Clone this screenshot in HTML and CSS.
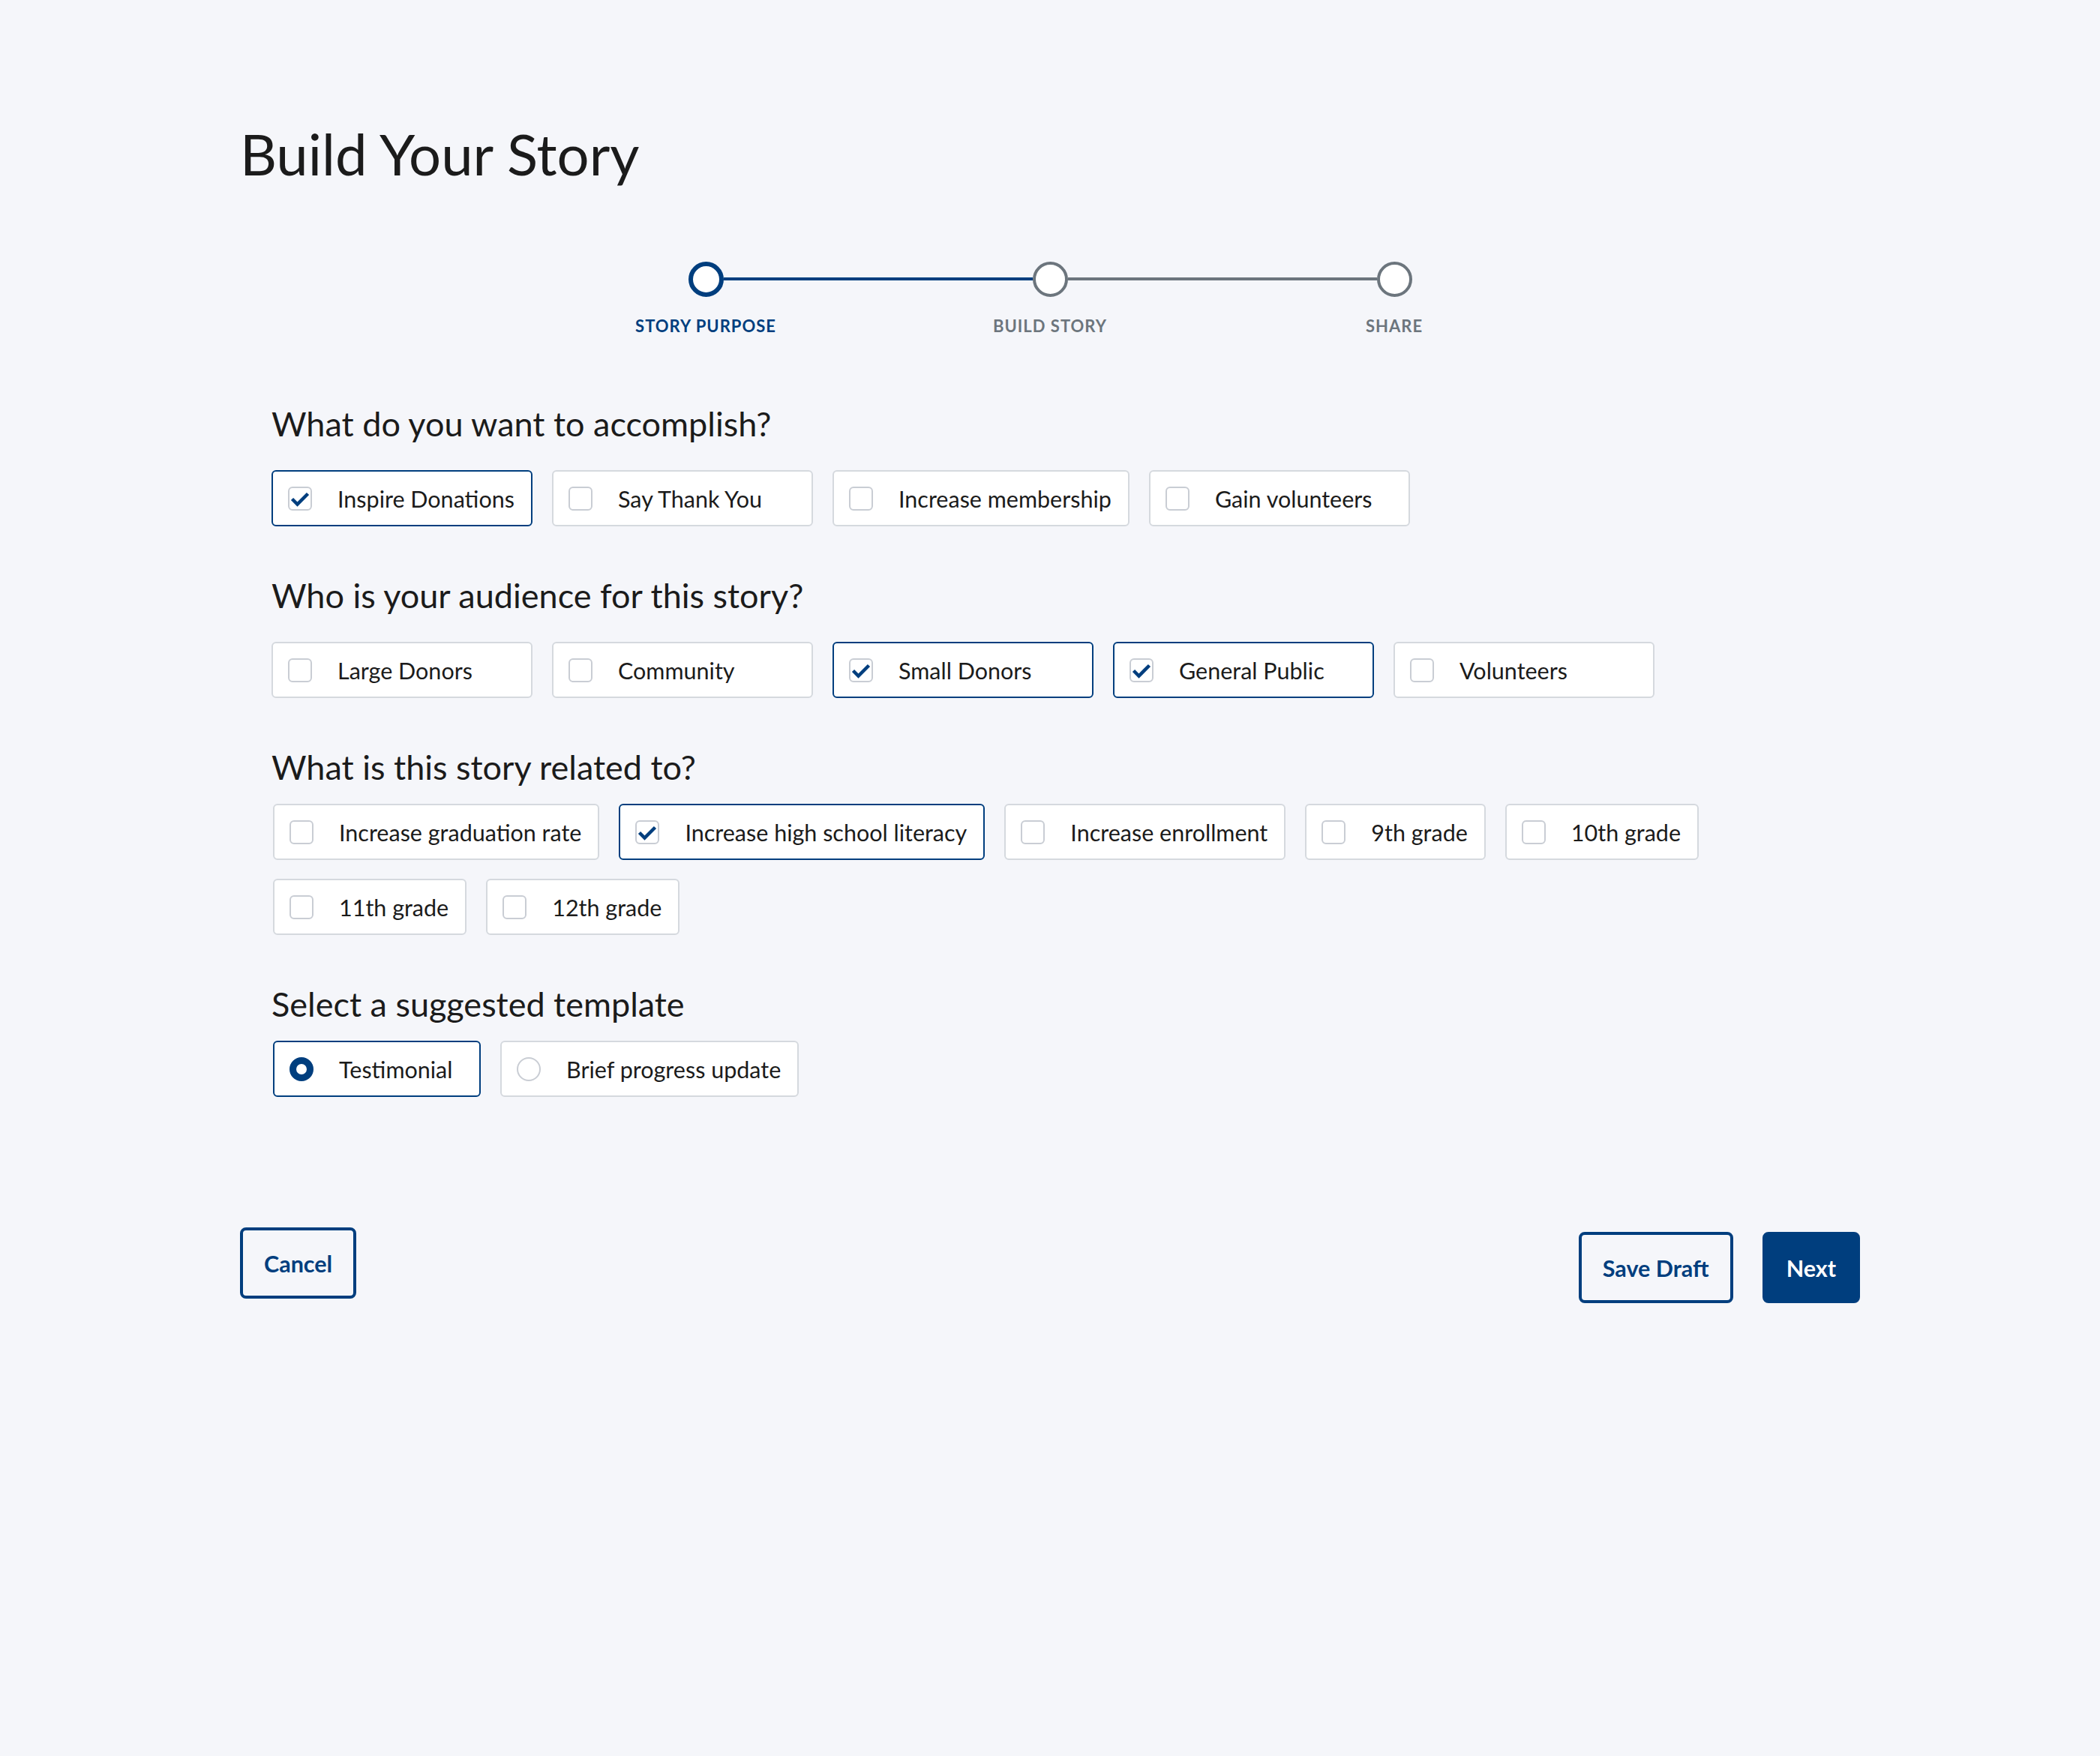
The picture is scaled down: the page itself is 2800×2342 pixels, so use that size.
FILE: index.html
```html
<!DOCTYPE html>
<html lang="en">
<head>
<meta charset="utf-8">
<title>Build Your Story</title>
<link rel="stylesheet" href="styles.css">
</head>
<body>
<main class="page">
  <h1 class="page-title">Build Your Story</h1>

  <nav class="stepper" aria-label="Progress">
    <div class="stepper-track">
      <span class="step-dot step-dot--active"></span>
      <span class="step-line step-line--done"></span>
      <span class="step-dot"></span>
      <span class="step-line"></span>
      <span class="step-dot"></span>
    </div>
    <ol class="stepper-labels">
      <li class="step-label step-label--active">STORY PURPOSE</li>
      <li class="step-label">BUILD STORY</li>
      <li class="step-label">SHARE</li>
    </ol>
  </nav>

  <form class="story-form">
    <section class="question question--wide">
      <h2 class="question-title">What do you want to accomplish?</h2>
      <div class="options">
        <label class="option option--checked"><span class="checkbox"><svg viewBox="0 0 28 28"><path d="M3.5 14.5 L10.5 21.5 L24.5 7.5"/></svg></span><span class="option-text">Inspire Donations</span></label>
        <label class="option"><span class="checkbox"></span><span class="option-text">Say Thank You</span></label>
        <label class="option"><span class="checkbox"></span><span class="option-text">Increase membership</span></label>
        <label class="option"><span class="checkbox"></span><span class="option-text">Gain volunteers</span></label>
      </div>
    </section>

    <section class="question question--wide">
      <h2 class="question-title">Who is your audience for this story?</h2>
      <div class="options">
        <label class="option"><span class="checkbox"></span><span class="option-text">Large Donors</span></label>
        <label class="option"><span class="checkbox"></span><span class="option-text">Community</span></label>
        <label class="option option--checked"><span class="checkbox"><svg viewBox="0 0 28 28"><path d="M3.5 14.5 L10.5 21.5 L24.5 7.5"/></svg></span><span class="option-text">Small Donors</span></label>
        <label class="option option--checked"><span class="checkbox"><svg viewBox="0 0 28 28"><path d="M3.5 14.5 L10.5 21.5 L24.5 7.5"/></svg></span><span class="option-text">General Public</span></label>
        <label class="option"><span class="checkbox"></span><span class="option-text">Volunteers</span></label>
      </div>
    </section>

    <section class="question question--compact">
      <h2 class="question-title">What is this story related to?</h2>
      <div class="options">
        <label class="option"><span class="checkbox"></span><span class="option-text">Increase graduation rate</span></label>
        <label class="option option--checked"><span class="checkbox"><svg viewBox="0 0 28 28"><path d="M3.5 14.5 L10.5 21.5 L24.5 7.5"/></svg></span><span class="option-text">Increase high school literacy</span></label>
        <label class="option"><span class="checkbox"></span><span class="option-text">Increase enrollment</span></label>
        <label class="option"><span class="checkbox"></span><span class="option-text">9th grade</span></label>
        <label class="option"><span class="checkbox"></span><span class="option-text">10th grade</span></label>
        <label class="option"><span class="checkbox"></span><span class="option-text">11th grade</span></label>
        <label class="option"><span class="checkbox"></span><span class="option-text">12th grade</span></label>
      </div>
    </section>

    <section class="question question--compact question--template">
      <h2 class="question-title">Select a suggested template</h2>
      <div class="options">
        <label class="option option--checked"><span class="radio radio--checked"></span><span class="option-text">Testimonial</span></label>
        <label class="option"><span class="radio"></span><span class="option-text">Brief progress update</span></label>
      </div>
    </section>
  </form>

  <footer class="actions">
    <button class="btn btn--outline" type="button">Cancel</button>
    <div class="actions-right">
      <button class="btn btn--outline" type="button">Save Draft</button>
      <button class="btn btn--primary" type="button">Next</button>
    </div>
  </footer>
</main>
</body>
</html>
```

FILE: styles.css
```css
* {
  box-sizing: border-box;
}

html,
body {
  margin: 0;
}

body {
  background: #f5f6fa;
  font-family: Lato, "Noto Sans", sans-serif;
  color: #1b1b1b;
}

.page {
  width: 2160px;
  margin: 0 auto;
  padding: 157px 0 300px;
}

.page-title {
  margin: 0;
  font-size: 76px;
  line-height: 96px;
  font-weight: 400;
}

/* Stepper */
.stepper {
  margin-top: 95px;
}

.stepper-track {
  width: 965px;
  height: 48px;
  margin: 0 auto;
  display: flex;
  align-items: center;
}

.step-dot {
  flex: none;
  width: 47px;
  height: 47px;
  border-radius: 50%;
  border: 4px solid #6c757d;
  background: #fff;
}

.step-dot--active {
  border: 6px solid #003e7e;
}

.step-line {
  flex: 1;
  height: 4px;
  background: #6c757d;
}

.step-line--done {
  background: #003e7e;
}

.stepper-labels {
  list-style: none;
  margin: 24px auto 0;
  padding: 0;
  width: 1377px;
  display: grid;
  grid-template-columns: repeat(3, 1fr);
}

.step-label {
  text-align: center;
  font-size: 22px;
  line-height: 30px;
  font-weight: 700;
  letter-spacing: 1px;
  color: #6c757d;
}

.step-label--active {
  color: #003e7e;
}

/* Form */
.story-form {
  margin-top: 85px;
  padding-left: 42px;
}

.question + .question {
  margin-top: 62px;
}

.question-title {
  margin: 0;
  font-size: 45px;
  line-height: 60px;
  font-weight: 400;
}

.options {
  display: flex;
  flex-wrap: wrap;
  gap: 25px 26px;
  margin-top: 32px;
}

.question--compact .options {
  margin-top: 19px;
  padding-left: 2px;
}

.option {
  display: flex;
  align-items: center;
  gap: 34px;
  height: 75px;
  padding: 0 22px 0 20px;
  background: #fff;
  border: 2px solid #d5d9de;
  border-radius: 6px;
  font-size: 30.5px;
  line-height: 40px;
  cursor: pointer;
}

.question--wide .option {
  min-width: 348px;
}

.question--template .option {
  min-width: 277px;
}

.option--checked {
  border-color: #003e7e;
}

.checkbox {
  flex: none;
  width: 32px;
  height: 32px;
  border: 2px solid #c9cdd4;
  border-radius: 6px;
  background: #fff;
}

.checkbox svg {
  display: block;
  width: 28px;
  height: 28px;
  fill: none;
  stroke: #003e7e;
  stroke-width: 4.5;
  stroke-linejoin: miter;
}

.radio {
  flex: none;
  width: 32px;
  height: 32px;
  border: 2px solid #c9cdd4;
  border-radius: 50%;
  background: #fff;
}

.radio--checked {
  border: 9px solid #003e7e;
}

/* Actions */
.actions {
  margin-top: 174px;
  display: flex;
  justify-content: space-between;
  align-items: flex-start;
}

.actions-right {
  display: flex;
  gap: 39px;
  margin-top: 6px;
}

.btn {
  height: 95px;
  padding: 0 28px;
  border: 4px solid #003e7e;
  border-radius: 8px;
  font-family: Lato, "Noto Sans", sans-serif;
  font-size: 30.5px;
  font-weight: 700;
  cursor: pointer;
}

.btn--outline {
  background: transparent;
  color: #003e7e;
}

.btn--primary {
  background: #003e7e;
  color: #fff;
}
```
